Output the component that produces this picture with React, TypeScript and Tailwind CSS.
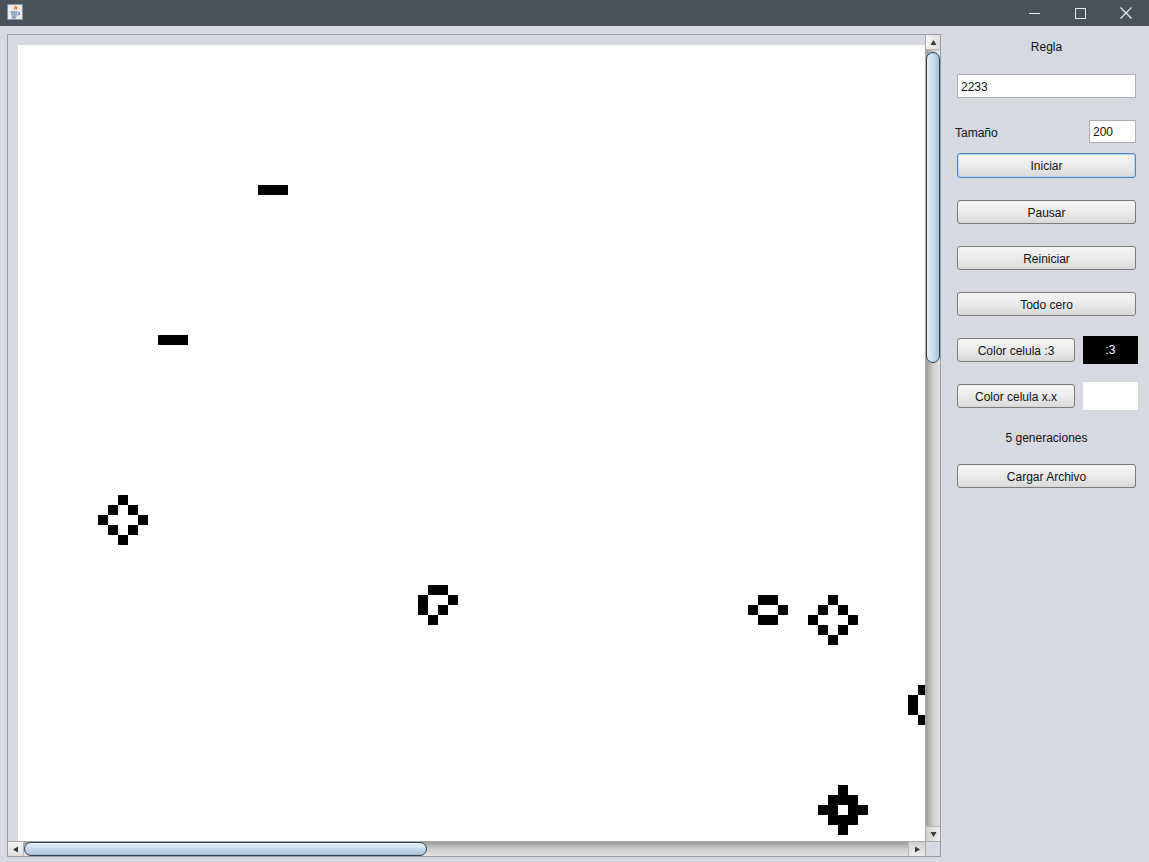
import React from "react";

const CELLS: [number, number][] = [
  [24, 14], [25, 14], [26, 14],
  [14, 29], [15, 29], [16, 29],
  [10, 45], [9, 46], [11, 46], [8, 47], [12, 47], [9, 48], [11, 48], [10, 49],
  [41, 54], [42, 54], [40, 55], [43, 55], [40, 56], [42, 56], [41, 57],
  [74, 55], [75, 55], [73, 56], [76, 56], [74, 57], [75, 57],
  [81, 55], [80, 56], [82, 56], [79, 57], [83, 57], [80, 58], [82, 58], [81, 59],
  [90, 64], [89, 65], [89, 66], [90, 67], [91, 65], [91, 66],
  [82, 74], [81, 75], [82, 75], [83, 75], [80, 76], [81, 76], [83, 76], [84, 76],
  [81, 77], [82, 77], [83, 77], [82, 78],
];

const font = { fontFamily: '"Liberation Sans", Arial, sans-serif' };

function JavaIcon() {
  return (
    <svg width="16" height="16" viewBox="0 0 16 16">
      <rect x="0.5" y="0.5" width="15" height="15" fill="#e9ecef" stroke="#8a939b" />
      <path d="M8 2c1.5 1.2-1.5 2.2 0 3.6M9.6 2.6c1 .9-.8 1.6.2 2.6" stroke="#e8701c" strokeWidth="1.3" fill="none" />
      <path d="M3.5 8h7M4 10h6M4.5 12h5M5 13.8h4M11 8.5c2 0 2 2.5-.5 2.5" stroke="#5a6e8c" strokeWidth="1.1" fill="none" />
    </svg>
  );
}

function Btn({ label, focused, className }: { label: string; focused?: boolean; className?: string }) {
  return (
    <div
      className={`flex items-center justify-center pt-[1px] rounded-[3px] border text-[12px] text-[#111] bg-gradient-to-b from-[#f6f6f6] via-[#ebebeb] to-[#d8d8d8] ${
        focused ? "border-[#4f86bf] shadow-[inset_0_0_0_1px_#b7d4ee]" : "border-[#7a7a7a]"
      } ${className ?? "h-[24px] w-full"}`}
    >
      {label}
    </div>
  );
}

function Tri({ dir }: { dir: "up" | "down" | "left" | "right" }) {
  const pts = {
    up: "3.5,1 0.5,6 6.5,6",
    down: "0.5,1 6.5,1 3.5,6",
    left: "6,0.5 6,6.5 1,3.5",
    right: "1,0.5 1,6.5 6,3.5",
  }[dir];
  return (
    <svg width="7" height="7" viewBox="0 0 7 7">
      <polygon points={pts} fill="#3a3a3a" />
    </svg>
  );
}

export default function App() {
  return (
    <div className="w-[1149px] h-[862px] bg-[#d6d9e0] flex flex-col overflow-hidden" style={font}>
      {/* title bar */}
      <div className="h-[26px] bg-[#4a535b] flex items-center shrink-0">
        <div className="ml-[7px] mt-[-3px]">
          <JavaIcon />
        </div>
        <div className="ml-auto flex items-center h-full">
          <div className="w-[46px] h-full flex items-center justify-center">
            <div className="w-[11px] h-px bg-[#eeeeee]" />
          </div>
          <div className="w-[46px] h-full flex items-center justify-center">
            <div className="w-[11px] h-[11px] border border-[#eeeeee]" />
          </div>
          <div className="w-[46px] h-full flex items-center justify-center">
            <svg width="12" height="12" viewBox="0 0 12 12">
              <path d="M0.5 0.5l11 11M11.5 0.5l-11 11" stroke="#eeeeee" strokeWidth="1.1" />
            </svg>
          </div>
        </div>
      </div>

      <div className="flex flex-1">
        {/* scroll pane */}
        <div className="ml-[7px] mt-[8px] w-[934px] h-[823px] border border-[#989ea7] flex flex-col">
          <div className="flex flex-1 min-h-0">
            <div className="w-[917px] h-[806px] overflow-hidden bg-[#d6d9e0] pl-[10px] pt-[10px]">
              <svg width="1000" height="900" className="block">
                <rect x="0" y="0" width="1000" height="900" fill="#ffffff" />
                {CELLS.map(([c, r], i) => (
                  <rect key={i} x={c * 10} y={r * 10} width="10" height="10" fill="#000000" />
                ))}
              </svg>
            </div>
            {/* vertical scrollbar */}
            <div className="w-[15px] flex flex-col border-l border-[#a9a9a9] bg-gradient-to-r from-[#9c9c9c] via-[#cdcdcd] to-[#e4e4e4]">
              <div className="h-[15px] flex items-center justify-center bg-gradient-to-r from-[#f5f5f5] to-[#dedede] border-b border-[#b9b9b9]">
                <Tri dir="up" />
              </div>
              <div className="h-[2px]" />
              <div className="h-[311px] rounded-[7px] border border-[#30404f] bg-gradient-to-r from-[#e6f0fa] via-[#c9dcef] to-[#a8c2dc]" />
              <div className="flex-1" />
              <div className="h-[15px] flex items-center justify-center bg-gradient-to-r from-[#cfcfcf] to-[#eeeeee] border-t border-[#b9b9b9]">
                <Tri dir="down" />
              </div>
            </div>
          </div>
          <div className="flex h-[15px]">
            {/* horizontal scrollbar */}
            <div className="w-[917px] flex border-t border-[#a9a9a9] bg-gradient-to-b from-[#9c9c9c] via-[#cdcdcd] to-[#e4e4e4]">
              <div className="w-[16px] flex items-center justify-center bg-gradient-to-b from-[#f5f5f5] to-[#dedede] border-r border-[#b9b9b9]">
                <Tri dir="left" />
              </div>
              <div className="w-[403px] rounded-[7px] border border-[#30404f] bg-gradient-to-b from-[#e6f0fa] via-[#c9dcef] to-[#a8c2dc]" />
              <div className="flex-1" />
              <div className="w-[17px] flex items-center justify-center bg-gradient-to-b from-[#cfcfcf] to-[#eeeeee] border-l border-[#b9b9b9]">
                <Tri dir="right" />
              </div>
            </div>
            <div className="w-[15px] border-t border-l border-[#a9a9a9] bg-[#d6d9e0]" />
          </div>
        </div>

        {/* right panel */}
        <div className="w-[208px] pl-[16px] pt-[14px] flex flex-col text-[12px] text-[#111]">
          <div className="w-[179px] text-center leading-[14px]">Regla</div>
          <div className="mt-[20px] w-[179px] h-[24px] bg-white border border-[#abadb3] flex items-center pl-[3px] pt-[1px]">2233</div>
          <div className="mt-[22px] w-[179px] h-[23px] flex items-center justify-between">
            <span className="ml-[-2px] pt-[2px]">Tamaño</span>
            <div className="w-[47px] h-[23px] bg-white border border-[#abadb3] flex items-center pl-[3px] pt-[1px]">200</div>
          </div>
          <div className="mt-[10px] w-[179px]">
            <Btn label="Iniciar" focused className="h-[25px] w-full" />
          </div>
          <div className="mt-[22px] w-[179px]">
            <Btn label="Pausar" />
          </div>
          <div className="mt-[22px] w-[179px]">
            <Btn label="Reiniciar" />
          </div>
          <div className="mt-[22px] w-[179px]">
            <Btn label="Todo cero" />
          </div>
          <div className="mt-[20px] w-[181px] h-[28px] flex items-center gap-[8px]">
            <Btn label="Color celula :3" className="h-[24px] w-[118px]" />
            <div className="w-[55px] h-[28px] bg-black text-white flex items-center justify-center">:3</div>
          </div>
          <div className="mt-[18px] w-[181px] h-[28px] flex items-center gap-[8px]">
            <Btn label="Color celula x.x" className="h-[24px] w-[118px]" />
            <div className="w-[55px] h-[28px] bg-white" />
          </div>
          <div className="mt-[20px] w-[179px] text-center leading-[14px] pt-[1px]">5 generaciones</div>
          <div className="mt-[19px] w-[179px]">
            <Btn label="Cargar Archivo" />
          </div>
        </div>
      </div>
    </div>
  );
}
